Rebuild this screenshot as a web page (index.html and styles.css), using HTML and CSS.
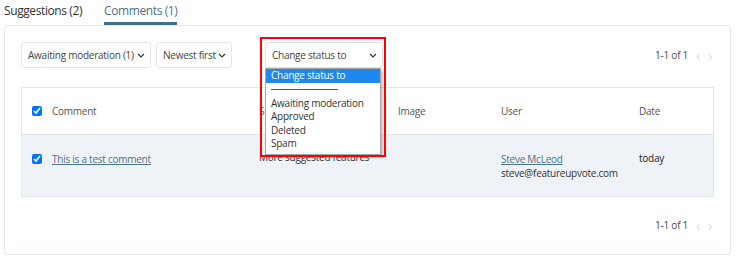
FILE: index.html
```html
<!DOCTYPE html>
<html>
<head>
  <meta charset="UTF-8">
  <title>Comments</title>
  <link rel="stylesheet" href="styles.css">
</head>
<body>
  <div class="tabs">
    <a class="tab">Suggestions (2)</a>
    <a class="tab active">Comments (1)</a>
  </div>

  <div class="panel">
    <div class="toolbar">
      <div class="select filter">
        <span>Awaiting moderation (1)</span>
        <svg class="chev" width="8" height="5" viewBox="0 0 8 5"><path d="M1 1l3 3 3-3" fill="none" stroke="#333" stroke-width="1.2"/></svg>
      </div>
      <div class="select sort">
        <span>Newest first</span>
        <svg class="chev" width="8" height="5" viewBox="0 0 8 5"><path d="M1 1l3 3 3-3" fill="none" stroke="#333" stroke-width="1.2"/></svg>
      </div>

      <div class="status">
        <div class="select status-select">
          <span>Change status to</span>
          <svg class="chev" width="8" height="5" viewBox="0 0 8 5"><path d="M1 1l3 3 3-3" fill="none" stroke="#333" stroke-width="1.2"/></svg>
        </div>
        <ul class="menu">
          <li class="picked">Change status to</li>
          <li class="divider"><span></span></li>
          <li>Awaiting moderation</li>
          <li>Approved</li>
          <li>Deleted</li>
          <li>Spam</li>
        </ul>
        <div class="marker"></div>
      </div>

      <div class="pager">
        <span>1-1 of 1</span>
        <span class="arrow">&#8249;</span>
        <span class="arrow">&#8250;</span>
      </div>
    </div>

    <div class="grid">
      <div class="row head">
        <div class="cell check"><input type="checkbox" checked></div>
        <div class="cell">Comment</div>
        <div class="cell">Suggestion</div>
        <div class="cell">Image</div>
        <div class="cell">User</div>
        <div class="cell">Date</div>
      </div>
      <div class="row body">
        <div class="cell check"><input type="checkbox" checked></div>
        <div class="cell"><a class="link">This is a test comment</a></div>
        <div class="cell sug">More suggested features</div>
        <div class="cell"></div>
        <div class="cell">
          <a class="link">Steve McLeod</a><br>
          steve@featureupvote.com
        </div>
        <div class="cell date">today</div>
      </div>
    </div>

    <div class="pager bottom">
      <span>1-1 of 1</span>
      <span class="arrow">&#8249;</span>
      <span class="arrow">&#8250;</span>
    </div>
  </div>
</body>
</html>
```

FILE: styles.css
```css
body {
  margin: 0;
  font-family: 'Open Sans', sans-serif;
  font-size: 10px;
  letter-spacing: -0.25px;
  color: #333;
  background: #ffffff;
}

/* tabs */
.tabs {
  display: flex;
  padding-left: 4px;
}

.tab {
  font-size: 12px;
  letter-spacing: -0.4px;
  line-height: 16px;
  padding: 3px 0 3px;
  border-bottom: 3px solid transparent;
  margin-right: 22px;
  color: #333;
}

.tab.active {
  color: #4b7286;
  border-bottom-color: #3f7285;
}

/* panel */
.panel {
  margin: 0 5px 0 4px;
  border: 1px solid #e4e8ed;
  border-radius: 4px;
  box-shadow: 0 1px 2px rgba(0, 0, 0, 0.05);
  padding: 16px;
  box-sizing: border-box;
  height: 230px;
}

.toolbar {
  display: flex;
  align-items: center;
  height: 26px;
}

.select {
  display: flex;
  align-items: center;
  justify-content: space-between;
  height: 26px;
  box-sizing: border-box;
  border: 1px solid #e3e7ec;
  border-radius: 3px;
  padding: 0 5px 0 6px;
  background: #fff;
  color: #444;
}

.filter { width: 130px; }

.sort {
  width: 76px;
  margin-left: 5px;
}

.status {
  position: relative;
  margin-left: 33px;
}

.status-select {
  width: 118px;
  border-color: #dfe3e8;
}

.menu {
  position: absolute;
  top: 26px;
  left: 0;
  width: 116px;
  margin: 0;
  padding: 0 0 3px;
  list-style: none;
  background: #fff;
  border: 1px solid #a9a9a9;
  box-shadow: 2px 2px 3px rgba(0, 0, 0, 0.25);
  box-sizing: border-box;
  z-index: 2;
}

.menu li {
  line-height: 13.5px;
  padding-left: 5px;
  color: #333;
}

.menu li.picked {
  background: #1e88f0;
  color: #fff;
}

.menu li.divider {
  height: 14px;
  display: flex;
  align-items: center;
}

.menu li.divider span {
  display: block;
  width: 67px;
  border-top: 1px solid #555;
}

.marker {
  position: absolute;
  left: -5px;
  top: -5px;
  width: 126px;
  height: 120px;
  border: 2px solid #f00;
  box-sizing: border-box;
  z-index: 3;
}

.pager {
  margin-left: auto;
  display: flex;
  align-items: center;
  color: #3b4d5c;
  padding-right: 2px;
}

.pager .arrow {
  color: #d6dce3;
  font-size: 14px;
  margin-left: 8px;
}

.pager.bottom {
  height: 26px;
  margin-top: 15px;
  justify-content: flex-end;
}

/* table */
.grid {
  margin-top: 19px;
  border: 1px solid #e3e7ec;
}

.row {
  display: grid;
  grid-template-columns: 19px 207px 139px 103px 138px 84px;
}

.row.head {
  height: 46px;
  align-items: center;
  border-bottom: 1px solid #e3e7ec;
  color: #555;
}

.row.body {
  height: 61px;
  background: #eff3f8;
  align-items: start;
}

.cell {
  padding-left: 11px;
  line-height: 14px;
}

.row.body .cell {
  padding-top: 17px;
}

.row.body .cell.sug {
  padding-top: 15px;
}

.row.body .cell.date {
  padding-top: 16px;
  color: #222;
}

.cell.check {
  padding-left: 10px;
  display: flex;
  align-items: center;
}

.row.body .cell.check {
  padding-top: 19px;
}

.cell.check input {
  width: 10px;
  height: 10px;
  margin: 0;
}

.link {
  color: #4b7286;
  text-decoration: underline;
}
```
